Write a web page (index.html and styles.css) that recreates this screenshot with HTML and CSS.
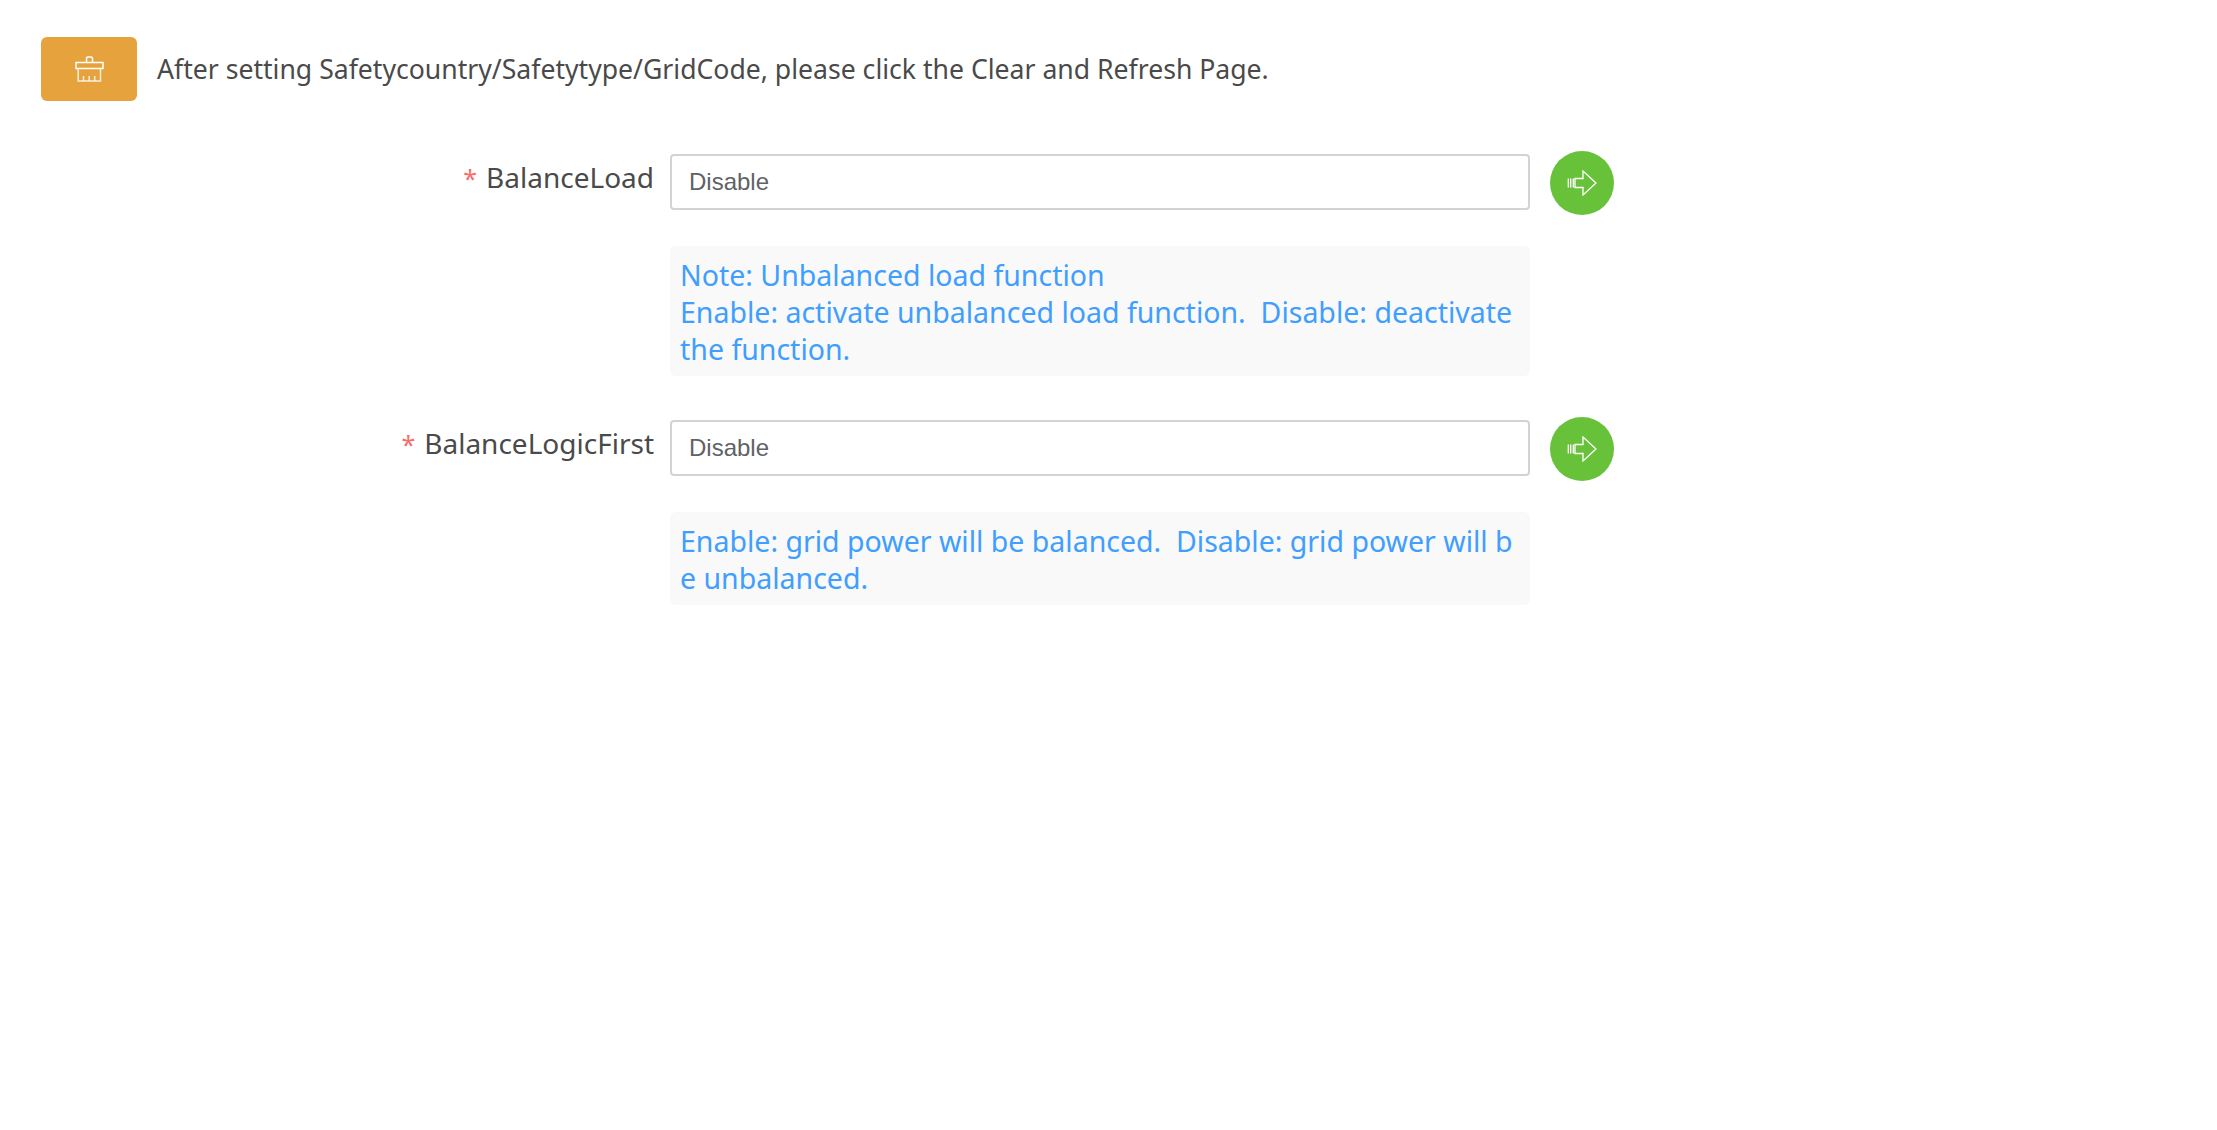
FILE: index.html
```html
<!DOCTYPE html>
<html lang="en">

<head>
    <meta charset="UTF-8" />
    <title>Balance Settings</title>
    <link rel="stylesheet" href="styles.css">
</head>

<body>
    <div class="top-bar">
        <button class="clear-button" aria-label="Clear">
            <svg width="30" height="26" viewBox="0 0 30 26" fill="none" stroke="#fff" stroke-width="1.5">
                <path d="M12.500 6.500V2.500a1.500 1.500 0 0 1 1.500-1.500h3a1.500 1.500 0 0 1 1.500 1.500v4" />
                <path d="M2 6.500h27v6H2z" />
                <path d="M4.200 12.500V25h22.300V12.500" stroke-opacity="0.8" />
                <path d="M9.500 25v-5M15.200 25v-5M20.700 25v-5" stroke-opacity="0.8" />
            </svg>
        </button>
        <span class="top-text">After setting Safetycountry/Safetytype/GridCode, please click the Clear and Refresh Page.</span>
    </div>

    <form class="settings">
        <div class="form-row">
            <label class="form-label"><span class="star">*</span>BalanceLoad</label>
            <input class="form-input" type="text" value="Disable" readonly>
            <button class="go-button" type="button" aria-label="Set">
                <svg width="30" height="26" viewBox="0 0 30 26" fill="none" stroke="#fff" stroke-width="1.300">
                    <path d="M8 8.500h8V1l13 12-13 12v-7.500H8z" />
                    <path d="M1.300 8.500v9M3.700 8.500v9M6.300 8.500v9" />
                </svg>
            </button>
        </div>
        <div class="note">Note: Unbalanced load function<br>Enable: activate unbalanced load function.&nbsp; Disable: deactivate the function.</div>

        <div class="form-row">
            <label class="form-label"><span class="star">*</span>BalanceLogicFirst</label>
            <input class="form-input" type="text" value="Disable" readonly>
            <button class="go-button" type="button" aria-label="Set">
                <svg width="30" height="26" viewBox="0 0 30 26" fill="none" stroke="#fff" stroke-width="1.300">
                    <path d="M8 8.500h8V1l13 12-13 12v-7.500H8z" />
                    <path d="M1.300 8.500v9M3.700 8.500v9M6.300 8.500v9" />
                </svg>
            </button>
        </div>
        <div class="note">Enable: grid power will be balanced.&nbsp; Disable: grid power will be unbalanced.</div>
    </form>
</body>

</html>
```

FILE: styles.css
```css
body {
    margin: 0;
    padding: 37px 41px 0;
    background-color: white;
    font-family: 'Noto Sans', sans-serif;
    color: #4a4a4a;
}

.top-bar {
    display: flex;
    align-items: center;
    gap: 20px;
    height: 64px;
}

.clear-button {
    width: 96px;
    height: 64px;
    background-color: #e6a23c;
    border: none;
    border-radius: 6px;
    display: flex;
    align-items: center;
    justify-content: center;
    padding: 0;
}

.top-text {
    font-size: 26.6px;
}

.settings {
    width: 1573px;
    margin-top: 50px;
}

.form-row {
    display: flex;
    align-items: center;
    height: 64px;
}

.form-label {
    width: 629px;
    padding-right: 16px;
    box-sizing: border-box;
    text-align: right;
    font-size: 28px;
    line-height: 40px;
    margin-bottom: 12px;
}

.star {
    color: #f56c6c;
    font-size: 25px;
    margin-right: 9px;
}

.form-input {
    width: 860px;
    height: 56px;
    margin-bottom: 2px;
    box-sizing: border-box;
    border: 2px solid #d3d3d3;
    border-radius: 4px;
    padding: 0 17px;
    font-family: 'Liberation Sans', sans-serif;
    font-size: 24px;
    color: #606266;
    outline: none;
}

.go-button {
    width: 64px;
    height: 64px;
    margin-left: 20px;
    background-color: #67c23a;
    border: none;
    border-radius: 50%;
    display: flex;
    align-items: center;
    justify-content: center;
    padding: 0;
}

.note {
    width: 860px;
    box-sizing: border-box;
    margin: 31px 0 41px 629px;
    padding: 11px 10px 8px;
    background-color: #f9f9f9;
    border-radius: 6px;
    color: #409eff;
    font-size: 28.5px;
    line-height: 37px;
    word-break: break-all;
}
```
